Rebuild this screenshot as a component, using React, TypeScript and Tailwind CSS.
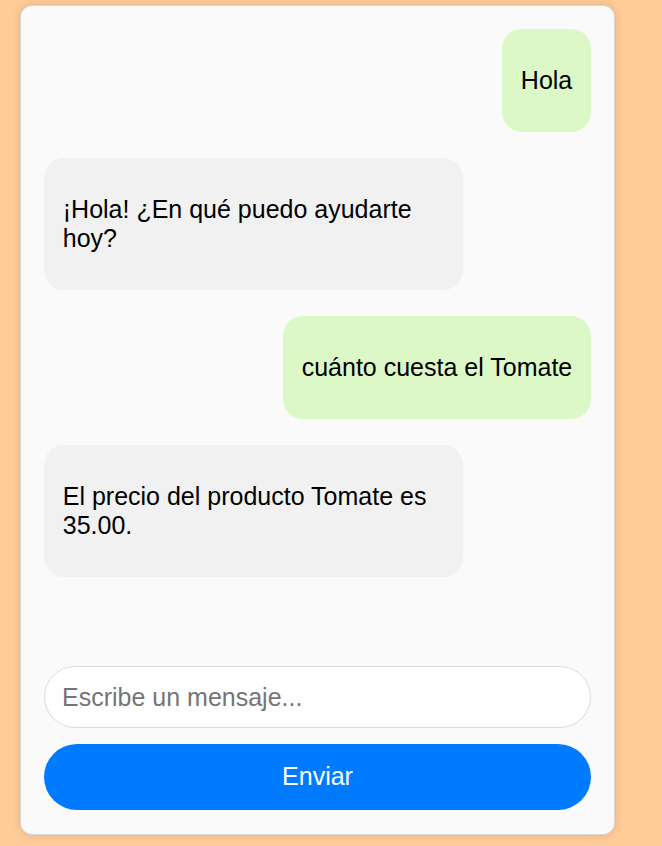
import React from "react";

type Msg = { from: "user" | "bot"; text: string };

const MESSAGES: Msg[] = [
  { from: "user", text: "Hola" },
  { from: "bot", text: "¡Hola! ¿En qué puedo ayudarte hoy?" },
  { from: "user", text: "cuánto cuesta el Tomate" },
  { from: "bot", text: "El precio del producto Tomate es 35.00." },
];

function Bubble({ msg }: { msg: Msg }) {
  const isUser = msg.from === "user";
  return (
    <div className={isUser ? "flex justify-end" : "flex justify-start"}>
      <div
        className={
          isUser
            ? "max-w-[419px] rounded-[20px] bg-[#dcf8c6] px-[18.75px] py-[37px] text-[25px] leading-[29px] text-black"
            : "w-[419px] rounded-[20px] bg-[#f1f1f1] px-[18.75px] py-[37px] text-[25px] leading-[29px] text-black"
        }
      >
        {msg.text}
      </div>
    </div>
  );
}

export default function App() {
  return (
    <div
      className="min-h-[846px] bg-[#ffcb97] pt-[5px] pl-[20px]"
      style={{ fontFamily: '"Liberation Sans", Arial, sans-serif' }}
    >
      <div className="flex h-[830px] w-[595px] flex-col rounded-[12px] border border-[#d6d6d6] bg-[#fafafa] pt-[23px] pl-[23px] pr-[23px] pb-[24px] shadow-[0_0_10px_rgba(0,0,0,0.12)]">
        <div className="flex flex-1 flex-col gap-[26px]">
          {MESSAGES.map((m, i) => (
            <Bubble key={i} msg={m} />
          ))}
        </div>
        <input
          type="text"
          placeholder="Escribe un mensaje..."
          className="h-[62px] w-full rounded-full border border-[#dcdcdc] bg-white px-[17px] text-[25px] text-black outline-none placeholder:text-[#757575]"
        />
        <button className="mt-[16px] h-[66px] w-full rounded-full bg-[#007bff] text-[25px] text-white">
          Enviar
        </button>
      </div>
    </div>
  );
}
